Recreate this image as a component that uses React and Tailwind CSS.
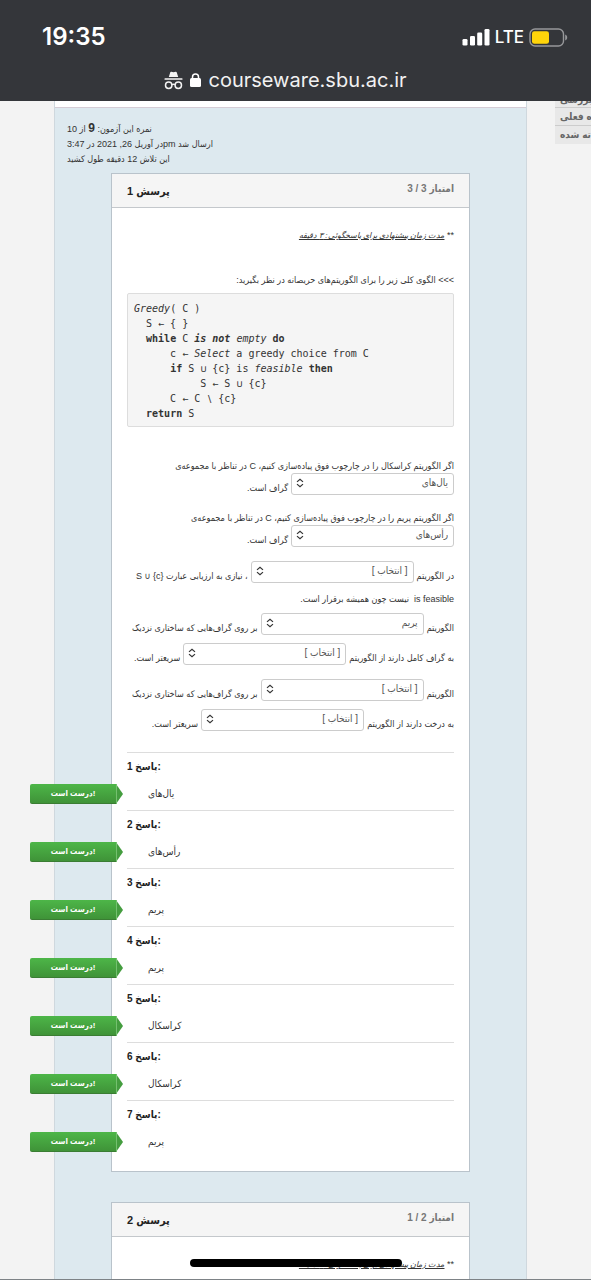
import React from "react";

const answers = ["یال‌های", "رأس‌های", "پریم", "پریم", "کراسکال", "کراسکال", "پریم"];
const placeholder = "[ انتخاب ]";
const choices = [placeholder, "یال‌های", "رأس‌های", "پریم", "کراسکال"];

function StatusBar() {
  return (
    <header className="h-[101px] shrink-0 bg-[#34363a] text-white">
      <div className="flex h-[60px] items-end justify-between pr-[23px] pb-[9px] pl-[42px]">
        <span className="font-['Inter',sans-serif] text-[24px] leading-7 font-semibold">19:35</span>
        <div className="flex h-7 items-center gap-[5px]">
          <svg width="28" height="18" viewBox="0 0 28 18" fill="#fff" aria-hidden="true">
            <rect x="0.5" y="11" width="5" height="6.5" rx="1.3" />
            <rect x="8" y="8" width="5" height="9.5" rx="1.3" />
            <rect x="15.2" y="4.5" width="5" height="13" rx="1.3" />
            <rect x="22.5" y="1" width="5" height="16.5" rx="1.3" />
          </svg>
          <span className="font-['Inter',sans-serif] text-[17px] leading-7 font-medium">LTE</span>
          <svg width="39" height="19" viewBox="0 0 39 19" aria-hidden="true">
            <rect x="1" y="1" width="33.5" height="17" rx="5" fill="none" stroke="#97989a" strokeWidth="1.4" />
            <rect x="3" y="3.2" width="17" height="12.6" rx="2.4" fill="#ffd50a" />
            <path d="M36.2 6.5c1.6.8 2 1.800 2 3s-.4 2.200-2 3z" fill="#97989a" />
          </svg>
        </div>
      </div>
      <div className="flex h-10 items-center justify-center pr-5">
        <svg width="19" height="19" viewBox="0 0 19 19" aria-hidden="true">
          <path d="M4.800 6 6.300 1.200Q6.600.5 7.300.700L9.500 1.300 11.700.700Q12.400.5 12.700 1.200L14.200 6z" fill="#f4f4f4" />
          <rect x="0.500" y="7.300" width="18" height="1.500" rx="0.500" fill="#f4f4f4" />
          <g fill="none" stroke="#f4f4f4" strokeWidth="1.500">
            <circle cx="4.700" cy="14.200" r="3.200" />
            <circle cx="14.300" cy="14.200" r="3.200" />
            <path d="M7.900 13.700q1.600-1 3.200 0" />
          </g>
        </svg>
        <svg className="mx-[7px]" width="11" height="15" viewBox="0 0 11 15" aria-hidden="true">
          <rect x="0" y="5" width="11" height="9" rx="1.500" fill="#fff" />
          <path d="M2.500 6V4a3 3 0 0 1 6 0v2" fill="none" stroke="#fff" strokeWidth="1.500" />
        </svg>
        <span className="font-['Inter',sans-serif] text-[20px] leading-7 text-[#f1f1f1]">courseware.sbu.ac.ir</span>
      </div>
    </header>
  );
}

function Choice({ value, label }) {
  return (
    <span className="relative inline-flex shrink-0">
      <select
        aria-label={label}
        defaultValue={value}
        className="h-[22px] w-[163px] appearance-none rounded-[3px] border border-[#ccc] bg-white pr-[5px] pb-[3px] pl-6 text-[10px] leading-4 text-[#555]"
      >
        {choices.map((c) => (
          <option key={c}>{c}</option>
        ))}
      </select>
      <svg className="pointer-events-none absolute top-[5px] left-[5px]" width="8" height="10" viewBox="0 0 8 10" fill="none" stroke="#333" strokeWidth="1.2" aria-hidden="true">
        <path d="M1 3.900 4 1.300l3 2.600M1 6.100 4 8.700l3-2.600" />
      </svg>
    </span>
  );
}

function Line({ children }) {
  return <div className="flex items-end gap-[3px] leading-[14px] whitespace-nowrap">{children}</div>;
}

function Question({ number, points, children }) {
  return (
    <section className="mr-14 ml-[56px] border border-[#b9c3cb] bg-white">
      <div className="flex h-[34px] items-center justify-between border-b border-[#c4c8cc] bg-[#f5f5f5] px-[15px]">
        <h2 className="text-[11px] leading-4 font-bold text-[#222]">پرسش {number}</h2>
        <span dir="rtl" className="pb-1 text-[10px] leading-3 font-bold text-[#777]">
          امتیاز {points}
        </span>
      </div>
      <div className="px-[15px]">{children}</div>
    </section>
  );
}

function TimeHint({ children }) {
  return (
    <p dir="rtl" className="pt-5 leading-[14px]">
      ** <em className="text-[8px] underline">{children}</em>
    </p>
  );
}

function Pseudocode() {
  return (
    <pre className="h-[134px] rounded-[2px] border border-[#ddd] bg-[#f5f5f5] px-[6px] py-[7px] font-['DejaVu_Sans_Mono',monospace] text-[10px] leading-[15px] text-[#333]">
      <i>Greedy</i>{"( C )\n  S ← { }\n  "}
      <b>while</b>{" C "}<b><i>is not</i></b>{" "}<i>empty</i>{" "}<b>do</b>{"\n      c ← "}
      <i>Select</i>{" a greedy choice from C\n      "}
      <b>if</b>{" S ∪ {c} is "}<i>feasible</i>{" "}<b>then</b>{"\n           S ← S ∪ {c}\n      C ← C ∖ {c}\n  "}
      <b>return</b>{" S"}
    </pre>
  );
}

function Answer({ index, text }) {
  return (
    <li className="relative h-[58px] border-t border-[#ddd] pt-[7px]">
      <h3 className="text-[10px] leading-[14px] font-bold text-[#222]">پاسخ {index}:</h3>
      <p className="mt-[13px] pl-[21px] text-[10px] leading-[14px]">
        <span dir="rtl">{text}</span>
      </p>
      <div className="absolute top-[31px] -left-[97px] flex h-5">
        <span className="flex w-[86px] items-center justify-center rounded-l-[2px] border-b border-[#3a7d33] bg-linear-to-b from-[#4db648] to-[#3f9338] text-[8px] leading-3 font-bold text-white">
          درست است!
        </span>
        <svg width="7" height="20" viewBox="0 0 7 20" aria-hidden="true">
          <path d="M0 0 7 10 0 20z" fill="#449d3f" />
          <path d="M.5 0v20" stroke="#74c06f" />
        </svg>
      </div>
    </li>
  );
}

export default function App() {
  return (
    <div className="relative flex h-screen flex-col overflow-hidden border-b border-[#7d8286] bg-[#f3f3f3] font-['Liberation_Sans','DejaVu_Sans_Condensed','DejaVu_Sans',sans-serif] text-[9px] text-[#333]">
      <StatusBar />
      <div className="flex min-h-0 flex-1 items-start">
        <main className="ml-[54px] min-w-0 flex-1 border-x border-[#cfd8de] bg-[#dde9ef]">
          <div className="h-[7px] border-b border-[#d5ccd5] bg-white" />
          <div className="px-3 pt-[14px] pb-[6px] leading-[15px]">
            <p>نمره این آزمون: <b className="text-[12px] leading-none">9</b> از 10</p>
            <p><span dir="rtl">ارسال شد pmدر آوریل 26, 2021 در 3:47</span></p>
            <p>این تلاش 12 دقیقه طول کشید</p>
          </div>
          <Question number={1} points="3 / 3">
            <TimeHint>مدت زمان پیشنهادی برای پاسخگوئی: ۳ دقیقه</TimeHint>
            <p dir="rtl" className="mt-[30px] mb-[6px] leading-[14px]">
              &gt;&gt;&gt; الگوی کلی زیر را برای الگوریتم‌های حریصانه در نظر بگیرید:
            </p>
            <Pseudocode />
            <div dir="rtl" className="pt-8">
              <Line>اگر الگوریتم کراسکال را در چارچوب فوق پیاده‌سازی کنیم، C در تناظر با مجموعه‌ی</Line>
              <Line>
                <Choice value="یال‌های" label="مجموعه برای کراسکال" />
                <span>گراف است.</span>
              </Line>
              <div className="mt-4">
                <Line>اگر الگوریتم پریم را در چارچوب فوق پیاده‌سازی کنیم، C در تناظر با مجموعه‌ی</Line>
                <Line>
                  <Choice value="رأس‌های" label="مجموعه برای پریم" />
                  <span>گراف است.</span>
                </Line>
              </div>
              <div className="mt-[14px]">
                <Line>
                  <span>در الگوریتم</span>
                  <Choice value={placeholder} label="الگوریتم بدون نیاز به ارزیابی" />
                  <span>، نیازی به ارزیابی عبارت <bdi dir="ltr">S ∪ {"{c}"}</bdi></span>
                </Line>
                <div className="mt-[9px]">
                  <Line><span><bdi>is feasible</bdi>&nbsp; نیست چون همیشه برقرار است.</span></Line>
                </div>
              </div>
              <div className="mt-[7px] flex flex-col gap-2">
                <Line>
                  <span>الگوریتم</span>
                  <Choice value="پریم" label="الگوریتم سریعتر برای گراف کامل" />
                  <span>بر روی گراف‌هایی که ساختاری نزدیک</span>
                </Line>
                <Line>
                  <span>به گراف کامل دارند از الگوریتم</span>
                  <Choice value={placeholder} label="الگوریتم کندتر برای گراف کامل" />
                  <span>سریعتر است.</span>
                </Line>
              </div>
              <div className="mt-[14px] flex flex-col gap-2">
                <Line>
                  <span>الگوریتم</span>
                  <Choice value={placeholder} label="الگوریتم سریعتر برای درخت" />
                  <span>بر روی گراف‌هایی که ساختاری نزدیک</span>
                </Line>
                <Line>
                  <span>به درخت دارند از الگوریتم</span>
                  <Choice value={placeholder} label="الگوریتم کندتر برای درخت" />
                  <span>سریعتر است.</span>
                </Line>
              </div>
            </div>
            <ol className="mt-[21px] mb-[13px]">
              {answers.map((a, i) => (
                <Answer key={i} index={i + 1} text={a} />
              ))}
            </ol>
          </Question>
          <div className="mt-[30px]">
            <Question number={2} points="2 / 1">
              <TimeHint>مدت زمان پیشنهادی برای پاسخگوئی: ۳ دقیقه</TimeHint>
              <div className="h-12" />
            </Question>
          </div>
        </main>
        <aside className="ml-7 w-9 shrink-0 overflow-hidden text-[10px] font-bold whitespace-nowrap text-[#666]">
          <div className="flex h-[7px] items-end border-b border-[#ccc] bg-[#e8e8e8] pl-[5px] leading-[14px]">
            <span dir="rtl">بررسی</span>
          </div>
          <div className="h-[18px] border-b border-[#ccc] bg-[#e8e8e8] pl-[5px] leading-[17px]">
            <span dir="rtl">ره فعلی</span>
          </div>
          <div className="h-[18px] bg-[#e8e8e8] pl-[5px] leading-[17px]">
            <span dir="rtl">ته شده</span>
          </div>
        </aside>
      </div>
      <div className="absolute bottom-[12px] left-1/2 h-2 w-[212px] -translate-x-1/2 rounded-full bg-black" />
    </div>
  );
}
